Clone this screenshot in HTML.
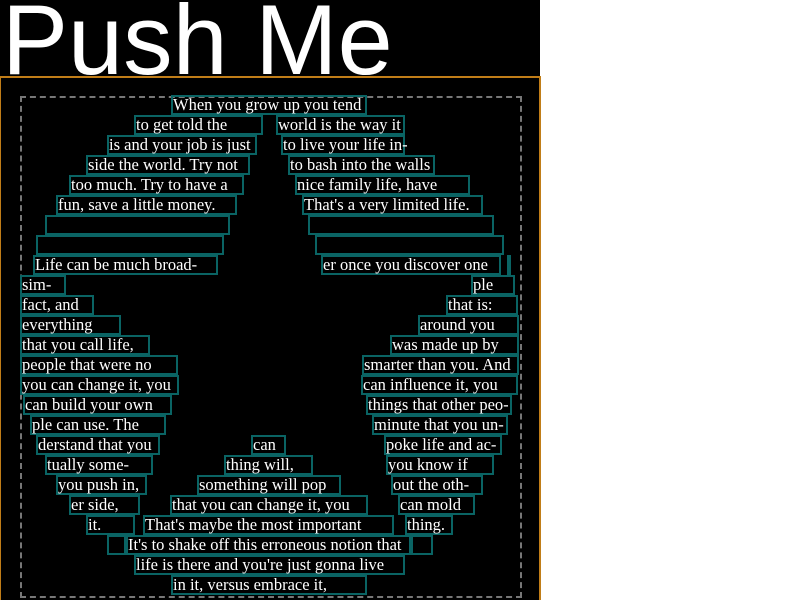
<!DOCTYPE html>
<html><head><meta charset="utf-8"><style>
html,body{margin:0;padding:0;background:#fff;width:800px;height:600px;overflow:hidden;position:relative}
#bg{position:absolute;left:0;top:0;width:540px;height:600px;background:#000}
#title{position:absolute;left:2px;top:-10px;font:99px/1 "Liberation Sans",sans-serif;color:#fff;white-space:nowrap;z-index:1}
#frame{position:absolute;left:0;top:76px;width:538px;height:530px;border:1px solid #c07d18;border-width:2px 2px 0 1px}
#dash{position:absolute;left:20px;top:96px;width:498px;height:498px;border:2px dashed #777}
.b{position:absolute;height:16px;border:2px solid #0a6464;color:#fff;font:16.5px/16px "Liberation Serif",serif;white-space:nowrap;padding-left:0;box-sizing:content-box;z-index:2;overflow:visible}
</style></head><body>
<div id="bg"></div>
<div id="frame"></div>
<div id="dash"></div>
<div id="title">Push Me</div>
<div id="t"></div>
<script>
var R=[
[0,[[171,367,"When you grow up you tend"]]],
[1,[[134,263,"to get told the"],[276,405,"world is the way it"]]],
[2,[[107,257,"is and your job is just"],[281,405,"to live your life in-"]]],
[3,[[86,250,"side the world. Try not"],[288,435,"to bash into the walls"]]],
[4,[[69,244,"too much. Try to have a"],[295,470,"nice family life, have"]]],
[5,[[56,237,"fun, save a little money."],[302,483,"That's a very limited life."]]],
[6,[[45,230,""],[308,494,""]]],
[7,[[36,224,""],[315,504,""]]],
[8,[[33,218,"Life can be much broad-"],[321,501,"er once you discover one"],[507,510,""]]],
[9,[[20,66,"sim-"],[471,515,"ple"]]],
[10,[[20,94,"fact, and"],[446,518,"that is:"]]],
[11,[[20,121,"everything"],[418,519,"around you"]]],
[12,[[20,150,"that you call life,"],[390,519,"was made up by"]]],
[13,[[20,178,"people that were no"],[362,519,"smarter than you. And"]]],
[14,[[20,179,"you can change it, you"],[361,518,"can influence it, you"]]],
[15,[[23,172,"can build your own"],[366,512,"things that other peo-"]]],
[16,[[30,166,"ple can use. The"],[372,508,"minute that you un-"]]],
[17,[[36,160,"derstand that you"],[251,286,"can"],[384,502,"poke life and ac-"]]],
[18,[[45,153,"tually some-"],[224,313,"thing will,"],[386,494,"you know if"]]],
[19,[[56,147,"you push in,"],[197,341,"something will pop"],[391,483,"out the oth-"]]],
[20,[[69,140,"er side,"],[170,368,"that you can change it, you"],[398,475,"can mold"]]],
[21,[[86,135,"it."],[143,394,"That's maybe the most important"],[405,453,"thing."]]],
[22,[[107,126,""],[126,411,"It's to shake off this erroneous notion that"],[411,433,""]]],
[23,[[134,405,"life is there and you're just gonna live"]]],
[24,[[171,367,"in it, versus embrace it,"]]]
];
var h="";
R.forEach(function(r){var y=95+r[0]*20;r[1].forEach(function(b){h+='<div class="b" style="left:'+b[0]+'px;top:'+y+'px;width:'+(b[1]-b[0]-4)+'px">'+b[2]+'</div>';});});
document.getElementById("t").innerHTML=h;
</script>
</body></html>
